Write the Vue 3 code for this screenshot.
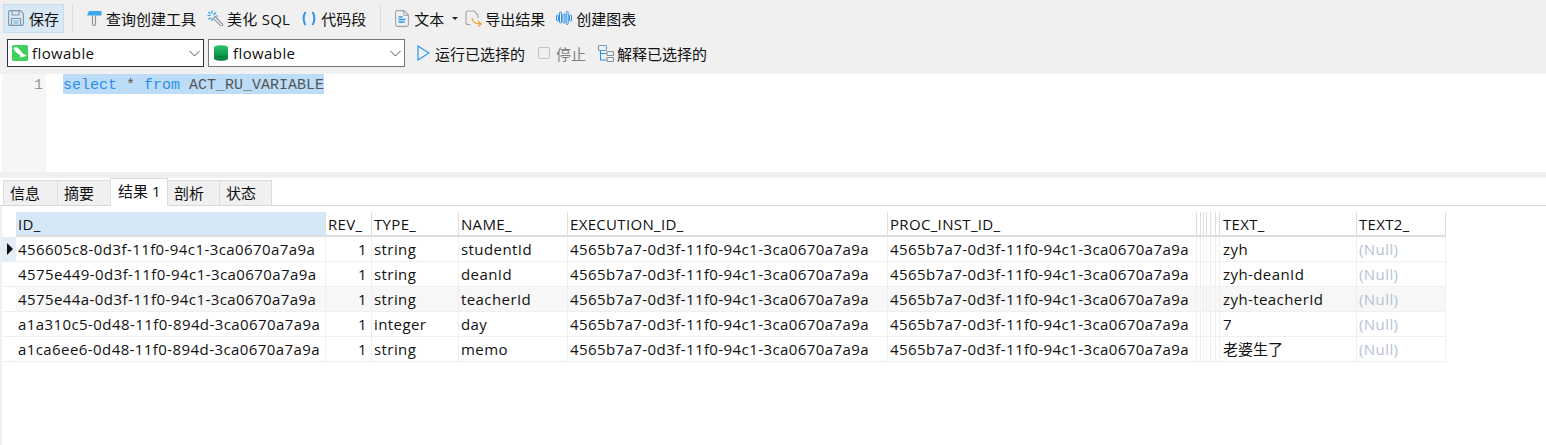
<script setup>
const cols = [
  { k: 'id', w: 310, t: 'ID_' }, { k: 'rev', w: 46, t: 'REV_' }, { k: 'type', w: 87, t: 'TYPE_' },
  { k: 'name', w: 109, t: 'NAME_' }, { k: 'exec', w: 320, t: 'EXECUTION_ID_' }, { k: 'proc', w: 309, t: 'PROC_INST_ID_' },
  { k: 'a', w: 4, t: '' }, { k: 'b', w: 3, t: '' }, { k: 'c', w: 3, t: '' }, { k: 'd', w: 4, t: '' }, { k: 'e', w: 5, t: '' }, { k: 'f', w: 4, t: '' },
  { k: 'text', w: 137, t: 'TEXT_' }, { k: 'text2', w: 89, t: 'TEXT2_' }
]
const ex = '4565b7a7-0d3f-11f0-94c1-3ca0670a7a9a'
const rows = [
  ['456605c8-0d3f-11f0-94c1-3ca0670a7a9a', 'string', 'studentId', 'zyh'],
  ['4575e449-0d3f-11f0-94c1-3ca0670a7a9a', 'string', 'deanId', 'zyh-deanId'],
  ['4575e44a-0d3f-11f0-94c1-3ca0670a7a9a', 'string', 'teacherId', 'zyh-teacherId'],
  ['a1a310c5-0d48-11f0-894d-3ca0670a7a9a', 'integer', 'day', '7'],
  ['a1ca6ee6-0d48-11f0-894d-3ca0670a7a9a', 'string', 'memo', '老婆生了']
].map(r => ({ id: r[0], rev: '1', type: r[1], name: r[2], exec: ex, proc: ex, text: r[3], text2: '(Null)' }))
const tabs = [
  { t: '信息', w: 54 }, { t: '摘要', w: 53 }, { t: '结果 1', w: 58 }, { t: '剖析', w: 52 }, { t: '状态', w: 53 }
]
</script>

<template>
  <div class="page">
    <div class="bar top">
      <button class="tb save">
        <svg width="16" height="16" viewBox="0 0 16 16" fill="none" stroke="#8496a6" stroke-width="1.100"><path d="M.6 2A1.400 1.400 0 0 1 2 .6h10.300l3.100 3.100V14a1.400 1.400 0 0 1-1.400 1.400H2A1.400 1.400 0 0 1 .6 14z"/><path d="M4 .6v4.400h7V.6M3.500 15.400V8.500h9v6.900"/><path d="M5.500 11h5M5.500 13h5" stroke="#6aaee0"/></svg>
        保存
      </button>
      <i class="sep"></i>
      <button class="tb g1">
        <svg width="16" height="16" viewBox="0 0 16 16" fill="none"><path d="M6.500 5.500v8.500a1.500 1.500 0 0 0 3 0V5.500" stroke="#8a9299" stroke-width="1.100"/><path d="M3 1h12.500v4.500H1z" fill="#3aa9ee"/></svg>
        查询创建工具
      </button>
      <button class="tb g2">
        <svg width="17" height="16" viewBox="0 0 17 16" fill="none"><path d="M8 6.500l7.500 7.500a1.300 1.300 0 0 1-1.800 1.800L6.200 8.300z" stroke="#8a9299" stroke-width="1.100"/><path d="M5 .5v3M5 8v3M.5 5.500h3M6.500 5l2.500-2.500M3.500 4l-2-2M3.500 7.500l-2 2M9 6h2" stroke="#2f9fe8" stroke-width="1.200"/></svg>
        美化 SQL
      </button>
      <button class="tb g3">
        <svg width="14" height="15" viewBox="0 0 14 15" fill="none" stroke="#2b94ee" stroke-width="2"><path d="M3.500 1C1 4.500 1 10.500 3.500 14M10.500 1c2.500 3.500 2.500 9.500 0 13"/></svg>
        代码段
      </button>
      <i class="sep s2"></i>
      <button class="tb g4">
        <svg width="14" height="17" viewBox="0 0 14 17" fill="none"><path d="M.6 2.500A1.900 1.900 0 0 1 2.500.6H9l4.400 4.400V14.500a1.900 1.900 0 0 1-1.900 1.900h-9A1.900 1.900 0 0 1 .6 14.500z" stroke="#9aa3ac" stroke-width="1.100"/><path d="M8.700.8v4.500h4.500" stroke="#9aa3ac"/><path d="M3.500 7h4M3.500 9.500h7M3.500 12h6" stroke="#2b94ee" stroke-width="1.300"/></svg>
        文本
        <span class="caret"></span>
      </button>
      <button class="tb g5">
        <svg width="18" height="17" viewBox="0 0 18 17" fill="none"><path d="M5.500 14.500H3A2 2 0 0 1 1 12.500V3A2 2 0 0 1 3 1h6l4 4v3" stroke="#a0a6ad" stroke-width="1.100"/><path d="M7 8c.5 4 2.500 6 9 6M13 11l3.200 3L13 16.700" stroke="#f2a33a" stroke-width="1.300"/></svg>
        导出结果
      </button>
      <button class="tb g6">
        <svg width="16" height="14" viewBox="0 0 16 14" fill="none" stroke="#2b8fe8" stroke-width="1"><rect x=".5" y="4" width="2" height="6" rx="1"/><rect x="3.500" y="1" width="2" height="11" rx="1"/><rect x="6.900" y="3" width="2" height="9" rx="1"/><rect x="10.200" y=".5" width="2" height="13" rx="1"/><rect x="13.500" y="4" width="2" height="6" rx="1"/></svg>
        创建图表
      </button>
    </div>

    <div class="bar second">
      <div class="select first">
        <svg class="logo" width="16" height="16" viewBox="0 0 16 16"><rect width="16" height="16" rx="1.500" fill="#42d15e"/><path d="M1.500 3.500C2.500 1.500 5 2 6.500 3.500c2 1.800 3 4 5 5.500 1.200.8 2.300 1 3 1-1 1.500-3 2.500-4.500 1.500L8.500 13l-.5-3C5.500 9 3 6.500 1.500 3.500z" fill="#fff"/></svg>
        <span>flowable</span>
        <svg class="chev" width="11" height="7" viewBox="0 0 11 7" fill="none" stroke="#555"><path d="M.5 1l5 5 5-5"/></svg>
      </div>
      <div class="select second-sel">
        <svg class="logo" width="14" height="16" viewBox="0 0 14 16"><defs><linearGradient id="db" x1="0" x2="0" y1="0" y2="1"><stop offset="0" stop-color="#2cc06a"/><stop offset=".6" stop-color="#109a50"/><stop offset="1" stop-color="#0a7a3c"/></linearGradient></defs><path d="M0 2.500C0-.5 14-.5 14 2.500v11c0 3-14 3-14 0z" fill="url(#db)"/><path d="M0 9.500c2 2 12 2 14 0v1c-2 2-12 2-14 0z" fill="#0a7a3c"/></svg>
        <span>flowable</span>
        <svg class="chev" width="11" height="7" viewBox="0 0 11 7" fill="none" stroke="#555"><path d="M.5 1l5 5 5-5"/></svg>
      </div>
      <button class="tb run">
        <svg width="13" height="16" viewBox="0 0 13 16" fill="none" stroke="#2b94ee" stroke-width="1.200"><path d="M1 1v14l11-7z"/></svg>
        运行已选择的
      </button>
      <button class="tb stop">
        <span class="box"></span>
        停止
      </button>
      <button class="tb explain">
        <svg width="18" height="17" viewBox="0 0 18 17" fill="none" stroke-width="1.100"><rect x="1.500" y=".5" width="8" height="5" rx="1" stroke="#6f9cc4"/><path d="M3.500 5.500v9.500h6M3.500 8.500h6" stroke="#2b94ee"/><rect x="10" y="6.500" width="6.500" height="4" rx=".8" stroke="#8a9299"/><rect x="10" y="12.500" width="6.500" height="4" rx=".8" stroke="#8a9299"/></svg>
        解释已选择的
      </button>
    </div>

    <div class="editor">
      <div class="gutter">1</div>
      <div class="code"><span class="sel"><b>select</b> * <b>from</b> ACT_RU_VARIABLE</span></div>
    </div>

    <div class="split"></div>

    <div class="tabs">
      <div v-for="(t, i) in tabs" :key="t.t" class="tab" :class="{ on: i === 2 }" :style="{ width: t.w + 'px' }">{{ t.t }}</div>
    </div>

    <div class="result">
      <div class="indicator">
        <div class="ihead"></div>
        <div v-for="(r, i) in rows" :key="r.id" class="icell" :class="{ cur: i === 0 }"><span v-if="i === 0" class="arrow"></span></div>
      </div>
      <table class="grid">
        <colgroup>
          <col v-for="c in cols" :key="c.k" :style="{ width: c.w + 'px' }" />
        </colgroup>
        <thead>
          <tr>
            <th v-for="c in cols" :key="c.k" :class="['h-' + c.k, { active: c.k === 'id' }]">{{ c.t }}</th>
          </tr>
        </thead>
        <tbody>
          <tr v-for="(r, i) in rows" :key="r.id" :class="{ hl: i === 2 }">
            <td v-for="c in cols" :key="c.k" :class="['c-' + c.k, { cjk: i === 4 }]">{{ r[c.k] }}</td>
          </tr>
        </tbody>
      </table>
    </div>
  </div>
</template>

<style scoped>
.page {
  width: 1546px;
  height: 445px;
  overflow: hidden;
  background: #fff;
  font-family: "Open Sans", "Noto Sans CJK SC", sans-serif;
  font-size: 15px;
  color: #111;
  display: flex;
  flex-direction: column;
}
.bar {
  background: #f0f0f0;
  display: flex;
  align-items: center;
  box-sizing: border-box;
  flex: none;
}
.top {
  height: 36px;
  padding-left: 3px;
}
.second {
  height: 38px;
  padding: 0 0 4px 7px;
}
.tb {
  border: 0;
  background: none;
  padding: 0;
  font: inherit;
  color: inherit;
  display: flex;
  align-items: center;
  white-space: nowrap;
}
.save {
  width: 61px;
  height: 29px;
  box-sizing: border-box;
  padding-left: 4px;
  gap: 5px;
  background: #d9e8f5;
  border: 1px solid #c5dcef;
}
.sep {
  width: 1px;
  height: 28px;
  background: #dcdcdc;
  margin-left: 8px;
}
.g1 { margin-left: 13px; gap: 4px; }
.g2 { margin-left: 11px; gap: 3px; letter-spacing: .25px; }
.g3 { margin-left: 12px; gap: 5px; }
.s2 { margin-left: 14px; }
.g4 { margin-left: 14px; gap: 5px; }
.caret {
  width: 0;
  height: 0;
  border-left: 3px solid transparent;
  border-right: 3px solid transparent;
  border-top: 3px solid #222;
  margin-left: 3px;
}
.g5 { margin-left: 7px; gap: 2px; }
.g6 { margin-left: 11px; gap: 4px; }
.select {
  height: 28px;
  box-sizing: border-box;
  background: #fff;
  border: 1px solid #333;
  display: flex;
  align-items: center;
  gap: 4px;
  letter-spacing: .4px;
}
.first { width: 197px; padding: 0 3px 0 4px; }
.second-sel { width: 197px; margin-left: 4px; border-color: #777; padding: 0 3px 0 5px; gap: 5px; }
.select .chev { margin-left: auto; }
.run { margin-left: 12px; gap: 5px; }
.stop { margin-left: 13px; gap: 6px; color: #808080; }
.box {
  width: 12px;
  height: 12px;
  box-sizing: border-box;
  border: 1px solid #c4c4c4;
  border-radius: 2px;
}
.explain { margin-left: 11px; gap: 2px; }
.editor {
  height: 98px;
  flex: none;
  display: flex;
  background: #fff;
  font-family: "Liberation Mono", monospace;
  font-size: 15px;
  padding-left: 2px;
}
.gutter {
  width: 44px;
  box-sizing: border-box;
  background: #f6f6f6;
  text-align: right;
  padding-right: 3px;
  color: #999;
  line-height: 23px;
}
.code {
  padding-left: 17px;
  display: flex;
  align-items: flex-start;
  color: #555;
}
.sel { background: #bcdcf8; display: block; height: 20px; line-height: 23px; white-space: pre; }
.sel b { font-weight: 400; color: #2b8fe8; }
.split { height: 6px; background: #f0f0f0; flex: none; }
.tabs {
  height: 28px;
  box-sizing: border-box;
  display: flex;
  align-items: flex-end;
  padding-left: 3px;
  border-bottom: 1px solid #d8d8d8;
  flex: none;
}
.tab {
  height: 25px;
  box-sizing: border-box;
  background: #f0f0f0;
  border: 1px solid #dcdcdc;
  border-bottom: 0;
  border-right-width: 0;
  padding-left: 6px;
  line-height: 25px;
}
.tab:last-child { border-right-width: 1px; }
.tab.on {
  height: 28px;
  background: #fff;
  position: relative;
  margin-bottom: -1px;
  padding-left: 7px;
  line-height: 25px;
  border-right-width: 1px;
  margin-right: -1px;
}
.result {
  display: flex;
  padding-top: 6px;
  flex: 1;
  border-left: 2px solid #f0f0f0;
}
.indicator { width: 14px; flex: none; }
.ihead { height: 25px; }
.icell {
  height: 25px;
  box-sizing: border-box;
  border-bottom: 1px solid #eee;
  position: relative;
}
.icell.cur { background: #e3eef8; }
.arrow {
  position: absolute;
  left: 5px;
  top: 6px;
  border-top: 6px solid transparent;
  border-bottom: 6px solid transparent;
  border-left: 6px solid #111;
}
.grid {
  table-layout: fixed;
  border-collapse: separate;
  border-spacing: 0;
  width: 1430px;
  height: 150px;
}
th, td {
  height: 25px;
  box-sizing: border-box;
  padding: 0 2px;
  font-weight: 400;
  text-align: left;
  white-space: nowrap;
  overflow: hidden;
  border-right: 1px solid #efefef;
  border-bottom: 1px solid #efefef;
}
th {
  border-right-color: #dedede;
  border-bottom: 2px solid #dedede;
  letter-spacing: .33px;
}
td {
  padding-bottom: 1px;
  letter-spacing: .42px;
}
th.active { background: #d6e8f7; }
td.c-rev { text-align: right; padding-right: 4px; }
td.c-text2 { color: #b8c2d4; }
td.c-text, th.h-text { padding-left: 3px; }
td.c-text.cjk { letter-spacing: 0; }
tr.hl td { background: #f7f7f7; }
td.c-a, td.c-b, td.c-c, td.c-d, td.c-e, td.c-f,
th.h-a, th.h-b, th.h-c, th.h-d, th.h-e, th.h-f { padding: 0; }
</style>
